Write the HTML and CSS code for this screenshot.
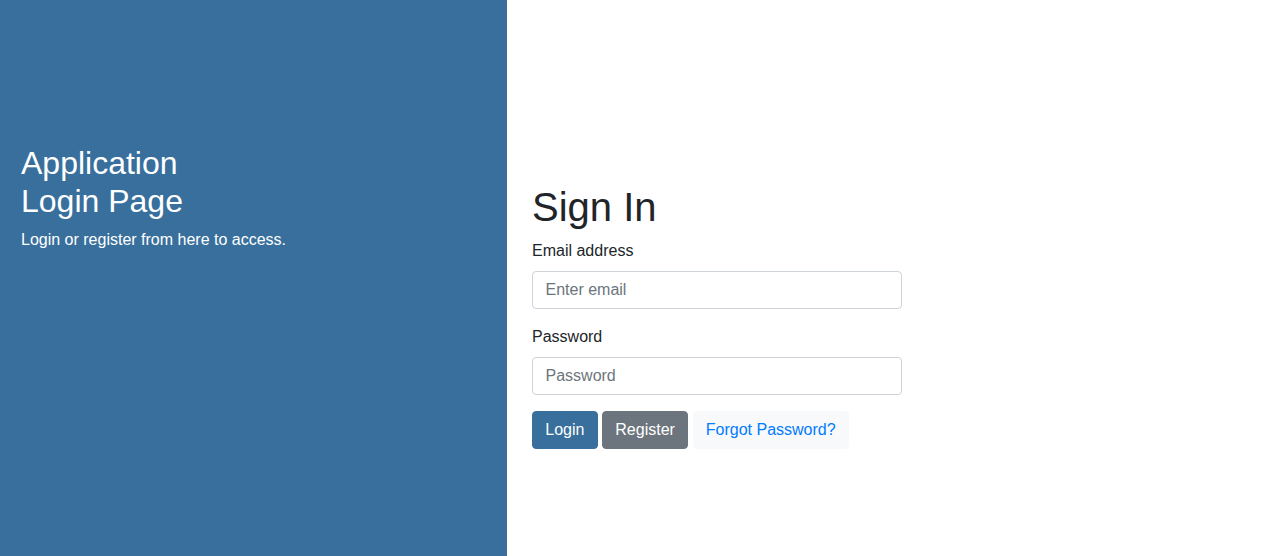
FILE: index.html
```html
<!DOCTYPE html>
<html lang="en">
<head>
<meta charset="utf-8">
<title>Login</title>
<link rel="stylesheet" href="styles.css">
</head>
<body>
<div class="page">
  <aside class="sidenav">
    <div class="login-main-text">
      <h2>Application<br>Login Page</h2>
      <p>Login or register from here to access.</p>
    </div>
  </aside>
  <main class="main">
    <div class="login-form">
      <h1>Sign In</h1>
      <form>
        <div class="form-group">
          <label>Email address</label>
          <input type="text" class="form-control" placeholder="Enter email">
        </div>
        <div class="form-group">
          <label>Password</label>
          <input type="password" class="form-control" placeholder="Password">
        </div>
        <div class="actions">
          <button type="button" class="btn btn-primary">Login</button>
          <button type="button" class="btn btn-secondary">Register</button>
          <button type="button" class="btn btn-light">Forgot Password?</button>
        </div>
      </form>
    </div>
  </main>
</div>
</body>
</html>
```

FILE: styles.css
```css
* { box-sizing: border-box; }
html, body { margin: 0; padding: 0; height: 100%; }
body {
  font-family: "Liberation Sans", Arial, sans-serif;
  font-size: 16px;
  line-height: 1.5;
  color: #212529;
  background: #fff;
}
.page {
  display: flex;
  height: 100%;
}
.sidenav {
  width: 507px;
  flex: 0 0 507px;
  background-color: #386f9d;
  color: #fff;
}
.login-main-text {
  padding: 143.5px 20px 0 21px;
}
.login-main-text h2 {
  margin: 0 0 8px 0;
  font-size: 32px;
  font-weight: 400;
  line-height: 1.2;
}
.login-main-text p {
  margin: 0;
}
.main {
  flex: 1;
  padding: 183px 25px 0 25px;
}
.login-form {
  width: 370px;
}
.login-form h1 {
  margin: 0 0 8px 0;
  font-size: 40px;
  font-weight: 400;
  line-height: 1.2;
}
.form-group {
  margin-bottom: 16px;
}
.form-group label {
  display: block;
  margin-bottom: 8px;
}
.form-control {
  display: block;
  width: 100%;
  height: 38px;
  padding: 6px 12.5px;
  font-family: inherit;
  font-size: 16px;
  line-height: 1.5;
  color: #495057;
  background: #fff;
  border: 1px solid #ced4da;
  border-radius: 4px;
}
.form-control::placeholder {
  color: #6c757d;
  opacity: 1;
}
.actions {
  display: flex;
  gap: 4.4px;
}
.btn {
  display: inline-block;
  padding: 6px 12.25px;
  font-family: inherit;
  font-size: 16px;
  line-height: 1.5;
  border: 1px solid transparent;
  border-radius: 4px;
  cursor: pointer;
}
.btn-primary {
  background-color: #386f9d;
  border-color: #386f9d;
  color: #fff;
}
.btn-secondary {
  background-color: #6c757d;
  border-color: #6c757d;
  color: #fff;
}
.btn-light {
  background-color: #f8f9fa;
  border-color: #f8f9fa;
  color: #007bff;
}
```
